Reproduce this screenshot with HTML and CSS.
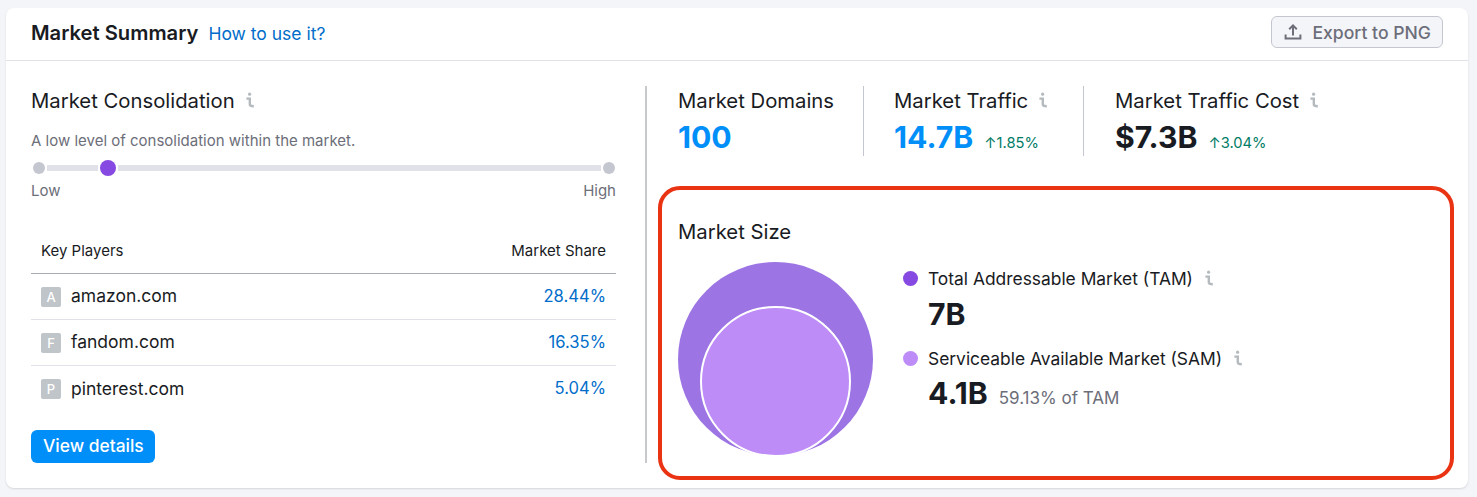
FILE: index.html
```html
<!DOCTYPE html>
<html>
<head>
    <meta charset="utf-8">
    <title>Market Summary</title>
    <link rel="stylesheet" href="styles.css">
</head>
<body>
    <svg class="sprite" width="0" height="0">
        <symbol id="info" viewBox="0 0 10 16">
            <circle cx="4.6" cy="2.2" r="1.6" fill="currentColor"/>
            <path d="M1.4 6.6H4.8V12.2C4.8 13.6 5.8 14.2 8.8 14.2" fill="none" stroke="currentColor" stroke-width="2.4"/>
        </symbol>
    </svg>

    <div class="card">
        <div class="card-header">
            <div class="title-group">
                <span class="card-title">Market Summary</span>
                <a class="help-link">How to use it?</a>
            </div>
            <button class="export-btn">
                <svg class="export-icon" viewBox="0 0 18 18">
                    <path d="M9 12.4V2.6M5.2 6.2L9 2.4L12.8 6.2M1.6 11.6V15.6H16.4V11.6" fill="none" stroke="currentColor" stroke-width="2"/>
                </svg>
                Export to PNG
            </button>
        </div>

        <div class="card-body">
            <div class="left-col">
                <div class="heading">Market Consolidation <svg class="info"><use href="#info"/></svg></div>
                <div class="subtext">A low level of consolidation within the market.</div>
                <div class="scale">
                    <span class="scale-end"></span>
                    <span class="scale-track short"></span>
                    <span class="scale-knob"></span>
                    <span class="scale-track"></span>
                    <span class="scale-end"></span>
                </div>
                <div class="scale-labels"><span>Low</span><span>High</span></div>

                <div class="players-head"><span>Key Players</span><span>Market Share</span></div>
                <div class="player">
                    <span class="favicon">A</span><span class="domain">amazon.com</span><a class="share">28.44%</a>
                </div>
                <div class="player">
                    <span class="favicon">F</span><span class="domain">fandom.com</span><a class="share">16.35%</a>
                </div>
                <div class="player">
                    <span class="favicon">P</span><span class="domain">pinterest.com</span><a class="share">5.04%</a>
                </div>
                <button class="details-btn">View details</button>
            </div>

            <div class="right-col">
                <div class="metrics">
                    <div class="metric first">
                        <div class="heading">Market Domains</div>
                        <div class="metric-value blue">100</div>
                    </div>
                    <div class="metric second">
                        <div class="heading">Market Traffic <svg class="info"><use href="#info"/></svg></div>
                        <div class="metric-value blue">14.7B <span class="delta">↑1.85%</span></div>
                    </div>
                    <div class="metric third">
                        <div class="heading">Market Traffic Cost <svg class="info"><use href="#info"/></svg></div>
                        <div class="metric-value">$7.3B <span class="delta">↑3.04%</span></div>
                    </div>
                </div>

                <div class="size-box">
                    <div class="heading">Market Size</div>
                    <div class="size-row">
                        <div class="venn"><div class="venn-inner"></div></div>
                        <div class="legend">
                            <div class="legend-label"><span class="dot tam"></span>Total Addressable Market (TAM) <svg class="info"><use href="#info"/></svg></div>
                            <div class="legend-value tam-value">7B</div>
                            <div class="legend-label sam-label"><span class="dot sam"></span>Serviceable Available Market (SAM) <svg class="info"><use href="#info"/></svg></div>
                            <div class="legend-value">4.1B <span class="legend-note">59.13% of TAM</span></div>
                        </div>
                    </div>
                </div>
            </div>
        </div>
    </div>
</body>
</html>
```

FILE: styles.css
```css
* {
    box-sizing: border-box;
}

body {
    margin: 0;
    height: 497px;
    overflow: hidden;
    padding: 8px 9px 9px 6px;
    background-color: #F4F5F9;
    color: #191B23;
    font-family: Inter, "Liberation Sans", sans-serif;
}

.sprite {
    display: block;
}

.card {
    height: 480px;
    background-color: #FFFFFF;
    border-radius: 8px;
    box-shadow: 0 1px 2px rgba(25, 27, 35, 0.14);
}

.card-header {
    display: flex;
    align-items: center;
    justify-content: space-between;
    height: 53px;
    padding: 0 25px 4px 25px;
    border-bottom: 1px solid #E0E1E9;
}

.title-group {
    display: flex;
    align-items: baseline;
    gap: 10px;
}

.card-title {
    font-size: 20.2px;
    font-weight: 600;
}

.help-link {
    font-size: 17.5px;
    color: #006DCA;
}

.export-btn {
    display: flex;
    align-items: center;
    gap: 10px;
    height: 32px;
    padding: 0 11px 0 12px;
    border: 1px solid #C4C7CF;
    border-radius: 6px;
    background-color: #F4F5F9;
    color: #6C6E79;
    font-family: inherit;
    font-size: 17.6px;
    font-weight: 500;
}

.export-icon {
    width: 18px;
    height: 18px;
}

.card-body {
    display: flex;
    height: 427px;
}

.left-col {
    width: 585px;
    margin-left: 25px;
    padding-top: 25px;
}

.heading {
    display: flex;
    align-items: center;
    gap: 10px;
    height: 28px;
    font-size: 20.3px;
}

.info {
    width: 10px;
    height: 16px;
    color: #B4BABE;
}

.subtext {
    margin-top: 17px;
    height: 20px;
    font-size: 15px;
    line-height: 20px;
    color: #6C6E79;
}

.scale {
    display: flex;
    align-items: center;
    gap: 2px;
    height: 18px;
    margin: 8px 1px 0 2px;
}

.scale-end {
    width: 12px;
    height: 12px;
    border-radius: 50%;
    background-color: #C4C7CF;
}

.scale-track {
    flex: 1;
    height: 6px;
    background-color: #E0E1E9;
}

.scale-track.short {
    flex: none;
    width: 51px;
}

.scale-knob {
    width: 16px;
    height: 16px;
    border-radius: 50%;
    background-color: #8649E1;
}

.scale-labels {
    display: flex;
    justify-content: space-between;
    margin-top: 4px;
    font-size: 15px;
    line-height: 20px;
    color: #6C6E79;
}

.players-head {
    display: flex;
    justify-content: space-between;
    align-items: center;
    height: 48px;
    margin-top: 25px;
    padding: 2px 10px 0 10px;
    border-bottom: 1px solid #A9ABB6;
    font-size: 15px;
}

.player {
    display: flex;
    align-items: center;
    height: 46px;
    padding: 0 10px 2px 10px;
    border-bottom: 1px solid #E0E1E9;
    font-size: 17.5px;
}

.player:last-of-type {
    border-bottom: none;
}

.favicon {
    display: flex;
    align-items: center;
    justify-content: center;
    width: 20px;
    height: 20px;
    margin: 2px 10px 0 0;
    border-radius: 2px;
    background-color: #BFC5C9;
    color: #FFFFFF;
    font-size: 13px;
    font-weight: 500;
}

.domain {
    flex: 1;
}

.share {
    font-size: 16.6px;
    color: #006DCA;
}

.details-btn {
    display: block;
    height: 33px;
    margin-top: 18px;
    padding: 0 11px 2px 12px;
    border: none;
    border-radius: 6px;
    background-color: #008FF8;
    color: #FFFFFF;
    font-family: inherit;
    font-size: 17.4px;
    font-weight: 500;
}

.right-col {
    width: 805px;
    height: 377px;
    margin: 25px 0 0 29px;
    padding-left: 11px;
    border-left: 2px solid #C8C9CC;
}

.metrics {
    display: flex;
    height: 70px;
}

.metric.first {
    width: 206px;
    padding-left: 20px;
    border-right: 1px solid #C4C7CF;
}

.metric.second {
    width: 220px;
    padding-left: 30px;
    border-right: 1px solid #C4C7CF;
}

.metric.third {
    padding-left: 31px;
}

.metric-value {
    display: flex;
    align-items: baseline;
    gap: 11px;
    margin-top: 5px;
    font-size: 30.2px;
    line-height: 36px;
    font-weight: 700;
}

.metric-value.blue {
    color: #008FF8;
}

.delta {
    font-size: 14.7px;
    font-weight: 400;
    color: #007C65;
}

.size-box {
    width: 796px;
    height: 294px;
    margin-top: 30px;
    padding: 27px 16px 0 16px;
    border: 4px solid #EA3313;
    border-radius: 22px;
}

.size-row {
    display: flex;
    margin-top: 17px;
}

.venn {
    position: relative;
    width: 195px;
    height: 194px;
    border-radius: 50%;
    background-color: #9D74E3;
}

.venn-inner {
    position: absolute;
    left: 22px;
    bottom: -1px;
    width: 151px;
    height: 151px;
    border: 2px solid #FFFFFF;
    border-radius: 50%;
    background-color: #BD8CF7;
}

.legend {
    padding: 5px 0 0 30px;
}

.legend-label {
    display: flex;
    align-items: center;
    height: 22px;
    font-size: 17.4px;
}

.legend-label .info {
    margin-left: 11px;
}

.sam-label {
    margin-top: 15px;
}

.dot {
    width: 15px;
    height: 15px;
    margin-right: 10px;
    border-radius: 50%;
}

.dot.tam {
    background-color: #8649E1;
}

.dot.sam {
    background-color: #BD8CF7;
}

.legend-value {
    display: flex;
    align-items: baseline;
    gap: 11px;
    height: 36px;
    margin: 6px 0 0 25px;
    font-size: 30.2px;
    line-height: 36px;
    font-weight: 700;
}

.tam-value {
    margin-top: 7px;
}

.legend-note {
    font-size: 17px;
    font-weight: 400;
    color: #6C6E79;
}
```
